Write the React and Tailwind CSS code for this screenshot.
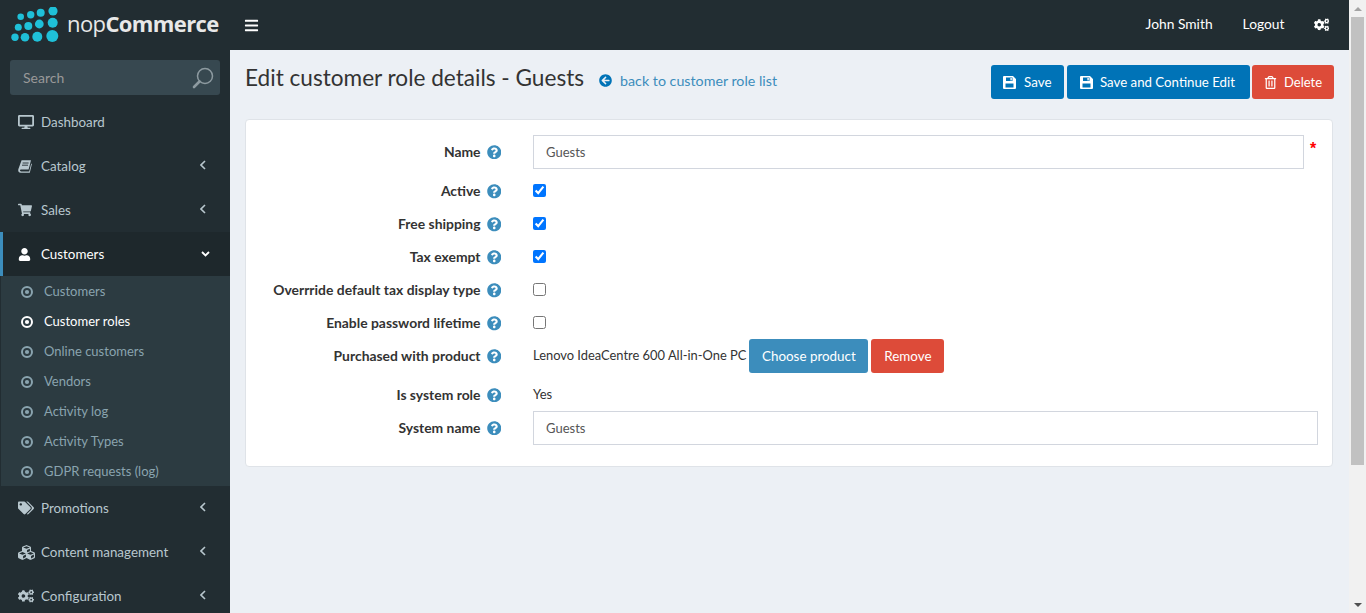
import {
  FaArrowCircleLeft,
  FaBars,
  FaCogs,
  FaCubes,
  FaDesktop,
  FaQuestionCircle,
  FaRegTrashAlt,
  FaShoppingCart,
  FaTags,
  FaUser,
} from "react-icons/fa";

const subItems = [
  "Customers",
  "Customer roles",
  "Online customers",
  "Vendors",
  "Activity log",
  "Activity Types",
  "GDPR requests (log)",
];

function Logo() {
  // rows of cyan dots growing toward the lower right
  const dots = [
    [20.7, 16.7, 3.3], [30.7, 14.7, 3.7], [40.7, 12.7, 4], [53, 11, 4.6],
    [18.3, 27.3, 3.5], [28.3, 26, 4], [39.3, 24, 4.4], [52.7, 22.7, 5],
    [15, 37.3, 3.7], [25, 37.3, 4.3], [37.3, 36.7, 5], [52.3, 36, 6],
  ];
  return (
    <svg width="50" height="36" viewBox="10 7 50 36" className="shrink-0">
      {dots.map(([cx, cy, r], i) => (
        <circle key={i} cx={cx} cy={cy} r={r} fill="#1fc0d8" />
      ))}
    </svg>
  );
}

function BookIcon() {
  return (
    <svg width="14" height="13" viewBox="0 0 14 13" fill="currentColor">
      <path d="M3.6 0.3 H13 L10.6 9.6 H3.2 C1.7 9.6 1.6 11.4 3.1 11.4 H11.2 L13.2 3.4 L13.9 4 L11.8 12.7 H2.6 C0.6 12.7 -0.2 11 0.4 9 Z" />
      <path d="M4.6 3 H10.6 M4 5.2 H10" stroke="#222d32" strokeWidth="0.9" />
    </svg>
  );
}

function SaveIcon() {
  return (
    <svg width="13" height="13" viewBox="0 0 13 13" fill="currentColor" className="mr-[8px] shrink-0">
      <path
        fillRule="evenodd"
        d="M1 0 H10 L13 3 V12 A1 1 0 0 1 12 13 H1 A1 1 0 0 1 0 12 V1 A1 1 0 0 1 1 0 Z M3 1.5 V5 H9.5 V1.5 Z M2.5 7.5 V11.5 H10.5 V7.5 Z"
      />
      <rect x="7.4" y="2" width="1.4" height="2.4" />
    </svg>
  );
}

function DotCircle() {
  return (
    <svg width="12" height="12" viewBox="0 0 12 12" fill="none" className="mr-[11px] shrink-0">
      <circle cx="6" cy="6" r="5" stroke="currentColor" strokeWidth="2" />
      <circle cx="6" cy="6" r="2.1" fill="currentColor" />
    </svg>
  );
}

function AngleLeft() {
  return (
    <svg width="6" height="10" viewBox="0 0 6 10" fill="none" stroke="currentColor" strokeWidth="1.6" className="-mt-[2px]">
      <path d="M5 1 L1 5 L5 9" />
    </svg>
  );
}

function AngleDown() {
  return (
    <svg width="9" height="6" viewBox="0 0 9 6" fill="none" stroke="currentColor" strokeWidth="1.8">
      <path d="M1 1 L4.5 4.5 L8 1" />
    </svg>
  );
}

function NavItem({ icon, label, open, noArrow }) {
  return (
    <div
      className={
        open
          ? "flex h-11 items-center border-l-[3px] border-[#3c8dbc] bg-[#1e282c] pl-[15px] pr-[20px] text-white"
          : "flex h-11 items-center pl-[18px] pr-[24px] text-[#b8c7ce]"
      }
    >
      <span className="flex w-[23px] shrink-0 items-center">{icon}</span>
      <span className="flex-1 text-[13.4px]">{label}</span>
      {noArrow ? null : open ? <AngleDown /> : <AngleLeft />}
    </div>
  );
}

function Field({ label, children, className = "", labelClass = "-mt-px" }) {
  return (
    <div className={"flex items-center " + className}>
      <div className="flex w-[255px] shrink-0 items-center justify-end gap-[6px] font-bold text-[#333]">
        <span className={labelClass + " text-[13.9px]"}>{label}</span>
        <FaQuestionCircle className="text-[14.5px] text-[#3c8dbc]" />
      </div>
      <div className="ml-[32px] flex min-w-0 flex-1 items-center">{children}</div>
    </div>
  );
}

function TextInput({ value }) {
  return (
    <div className="flex h-[34px] w-full items-center border border-[#d2d6de] bg-white px-3 pt-px text-[13px] text-[#555]">
      {value}
    </div>
  );
}

function Check({ checked }) {
  return (
    <input
      type="checkbox"
      defaultChecked={checked}
      className="m-0 -mt-[2px] h-[13px] w-[13px] accent-[#0075ff]"
    />
  );
}

function App() {
  return (
    <div className="flex h-[613px] overflow-hidden bg-[#ecf0f5] font-['Lato','Noto_Sans',sans-serif] text-[14px] text-[#333]">
      <div className="flex min-w-0 flex-1 flex-col">
        <header className="flex h-[50px] shrink-0 items-center bg-[#222d32] text-white">
          <div className="flex w-[230px] shrink-0 items-center pl-[10px]">
            <Logo />
            <span className="ml-[7px] -mt-[5px] font-['Open_Sans',sans-serif] text-[22px] leading-none tracking-[-0.6px] text-[#e8e8e8]">
              <span className="font-normal">nop</span>
              <span className="font-bold">Commerce</span>
            </span>
          </div>
          <FaBars className="ml-[14px] text-[15px]" />
          <div className="ml-auto flex items-center pr-[20px]">
            <span className="-mt-px text-[13.8px]">John Smith</span>
            <span className="ml-[30px] -mt-px text-[13.8px]">Logout</span>
            <FaCogs className="ml-[29px] text-[15.5px]" />
          </div>
        </header>

        <div className="flex min-h-0 flex-1">
          <aside className="w-[230px] shrink-0 overflow-hidden bg-[#222d32]">
            <div className="mx-[10px] mt-[10px] flex h-[35px] items-center justify-between rounded-[3px] bg-[#374850] pl-[13px] pr-[6px] text-[#999]">
              <span>Search</span>
              <svg width="22" height="22" viewBox="0 0 22 22" fill="none" stroke="#8d9aa0">
                <circle cx="13" cy="9" r="7.5" strokeWidth="1.5" />
                <path d="M7.5 14.5 L2 20" strokeWidth="2.6" strokeLinecap="round" />
              </svg>
            </div>
            <div className="mt-[5px]">
              <NavItem icon={<FaDesktop className="text-[16px]" />} label="Dashboard" noArrow />
              <NavItem icon={<BookIcon />} label="Catalog" />
              <NavItem icon={<FaShoppingCart className="text-[14px]" />} label="Sales" />
              <NavItem icon={<FaUser className="text-[13px]" />} label="Customers" open />
              <div className="ml-px bg-[#2c3b41]">
                {subItems.map((item) => (
                  <div
                    key={item}
                    className={
                      item === "Customer roles"
                        ? "flex h-[30px] items-center pl-5 pt-[2px] text-[13px] text-white"
                        : "flex h-[30px] items-center pl-5 pt-[2px] text-[13px] text-[#8aa4af]"
                    }
                  >
                    <DotCircle />
                    {item}
                  </div>
                ))}
              </div>
              <NavItem icon={<FaTags className="text-[16px]" />} label="Promotions" />
              <NavItem icon={<FaCubes className="text-[17px]" />} label="Content management" />
              <NavItem icon={<FaCogs className="text-[16px]" />} label="Configuration" />
            </div>
          </aside>

          <main className="min-w-0 flex-1 pl-[15px] pr-[16px]">
            <div className="flex h-[69px] items-start justify-between">
              <div className="flex items-center pt-[13px]">
                <h1 className="text-[22.6px] font-normal leading-[30px] text-[#333]">
                  Edit customer role details - Guests
                </h1>
                <a className="ml-[15px] mt-[5px] flex items-center text-[14.25px] text-[#3c8dbc]">
                  <FaArrowCircleLeft className="mr-[8px] text-[13px] text-[#0073b7]" />
                  back to customer role list
                </a>
              </div>
              <div className="-mr-px flex gap-[3px] pt-[15px]">
                <button className="flex h-[34px] w-[73px] items-center rounded-[3px] bg-[#0073b7] pl-3 text-[13.4px] text-white">
                  <SaveIcon />
                  Save
                </button>
                <button className="flex h-[34px] w-[183px] items-center rounded-[3px] bg-[#0073b7] pl-[13px] pt-px text-[13.25px] text-white">
                  <SaveIcon />
                  <span className="-ml-px">Save and Continue Edit</span>
                </button>
                <button className="-ml-px flex h-[34px] w-[82px] items-center rounded-[3px] bg-[#dd4b39] pl-3 pt-px text-[13px] text-white">
                  <FaRegTrashAlt className="mr-[7px] text-[13px]" />
                  Delete
                </button>
              </div>
            </div>

            <section className="flex flex-col rounded-[4px] border border-[#dfe3e8] bg-white pb-[21px] pr-[14px] pt-[15px]">
              <Field label="Name" className="h-[34px]" labelClass="mt-0">
                <TextInput value="Guests" />
                <span className="ml-[6px] -mt-[7px] w-[8px] shrink-0 font-['Liberation_Sans',sans-serif] text-[16px] font-bold leading-none text-[#f00]">*</span>
              </Field>
              <Field label="Active" className="mt-[6px] h-[33px]"><Check checked /></Field>
              <Field label="Free shipping" className="h-[33px]"><Check checked /></Field>
              <Field label="Tax exempt" className="h-[33px]"><Check checked /></Field>
              <Field label="Overrride default tax display type" className="h-[33px]"><Check /></Field>
              <Field label="Enable password lifetime" className="h-[33px]"><Check /></Field>
              <Field label="Purchased with product" className="h-[33px]">
                <span className="-mt-[2px] text-[12.9px]">Lenovo IdeaCentre 600 All-in-One PC</span>
                <button className="ml-[3px] -mt-[2px] h-[34px] w-[119px] rounded-[3px] bg-[#3c8dbc] pt-px text-[13.4px] text-white">Choose product</button>
                <button className="ml-[3px] -mt-[2px] h-[34px] w-[73px] rounded-[3px] bg-[#dd4b39] pt-px text-[13.4px] text-white">Remove</button>
              </Field>
              <Field label="Is system role" className="mt-[6px] h-[32px]" labelClass="mt-0">
                <span className="-mt-px text-[13px]">Yes</span>
              </Field>
              <Field label="System name" className="h-[34px]" labelClass="mt-0"><TextInput value="Guests" /></Field>
            </section>
          </main>
        </div>
      </div>

      <div className="flex w-[17px] shrink-0 flex-col bg-[#f1f1f1]">
        <div className="flex h-[17px] items-center justify-center">
          <div className="h-0 w-0 border-x-[4px] border-b-[4px] border-x-transparent border-b-[#a3a3a3]" />
        </div>
        <div className="mx-[2px] h-[448px] bg-[#c1c1c1]" />
        <div className="mt-auto flex h-[17px] items-center justify-center">
          <div className="h-0 w-0 border-x-[4px] border-t-[4px] border-x-transparent border-t-[#505050]" />
        </div>
      </div>
    </div>
  );
}

export default App;
